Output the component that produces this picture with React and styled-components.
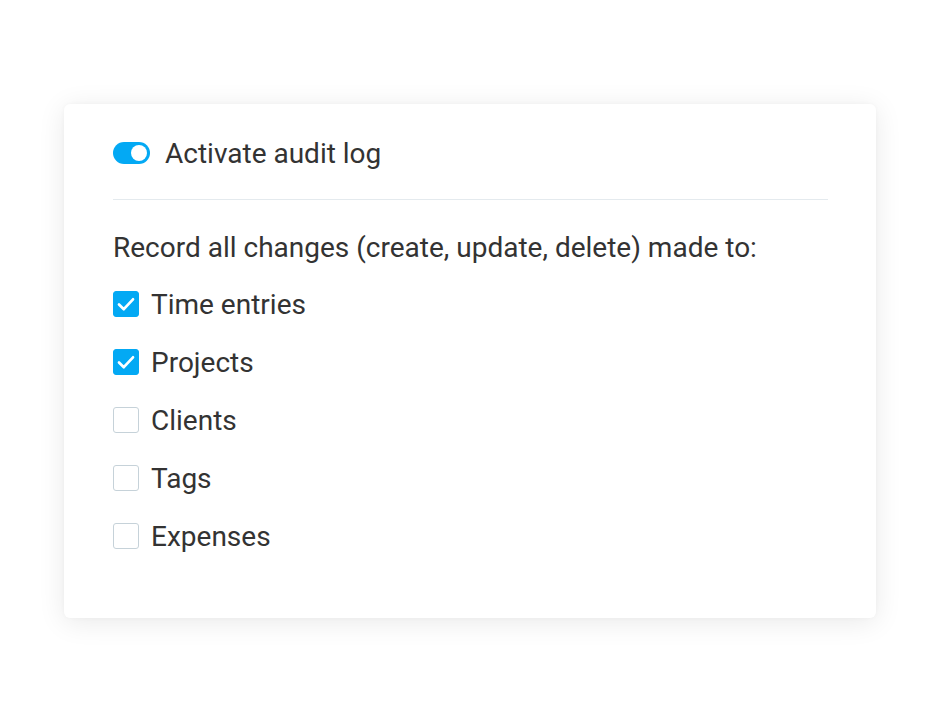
import React from "react";
import styled, { createGlobalStyle } from "styled-components";

const Global = createGlobalStyle`
  html, body { margin: 0; padding: 0; background: #ffffff; }
  body { font-family: Roboto, "Liberation Sans", Arial, sans-serif; }
`;

const Page = styled.div`
  height: 721px;
  display: flex;
  align-items: center;
  justify-content: center;
`;

const Card = styled.div`
  width: 812px;
  height: 514px;
  box-sizing: border-box;
  background: #fff;
  border-radius: 6px;
  box-shadow: 0 4px 28px rgba(0, 0, 0, 0.09), 0 0 4px rgba(0, 0, 0, 0.03);
  padding: 35px 48px 0 49px;
  display: flex;
  flex-direction: column;
`;

const Row = styled.label`
  display: flex;
  align-items: center;
  height: 30px;
  gap: ${(p) => p.$gap || 12}px;
  font-size: 28px;
  line-height: 30px;
  color: #333333;
`;

const Toggle = styled.span`
  width: 37px;
  height: 22px;
  border-radius: 11px;
  background: #03a9f4;
  position: relative;
  flex: none;
  margin-top: -1px;
  &::after {
    content: "";
    position: absolute;
    right: 3px;
    top: 3px;
    width: 16px;
    height: 16px;
    border-radius: 50%;
    background: #fff;
  }
`;

const Divider = styled.div`
  height: 1px;
  background: #e4eaee;
  margin-top: 30px;
`;

const Intro = styled.div`
  margin-top: 33px;
  font-size: 28px;
  line-height: 30px;
  color: #333333;
`;

const List = styled.div`
  margin-top: 27px;
  display: flex;
  flex-direction: column;
  gap: 28px;
`;

const Box = styled.span`
  width: 26px;
  height: 26px;
  box-sizing: border-box;
  border-radius: 3px;
  flex: none;
  display: flex;
  align-items: center;
  justify-content: center;
  margin-top: -1px;
  background: ${(p) => (p.$checked ? "#03a9f4" : "#fff")};
  border: 1px solid ${(p) => (p.$checked ? "#03a9f4" : "#c6d2d9")};
`;

const Check = () => (
  <svg width="22" height="22" viewBox="0 0 22 22" fill="none">
    <path d="M4 11.5 L8.8 16.2 L18 6.3" stroke="#fff" strokeWidth="2.7" strokeLinecap="round" strokeLinejoin="round" />
  </svg>
);

const items = [
  { label: "Time entries", checked: true },
  { label: "Projects", checked: true },
  { label: "Clients", checked: false },
  { label: "Tags", checked: false },
  { label: "Expenses", checked: false },
];

export default function App() {
  return (
    <>
      <Global />
      <Page>
        <Card>
          <Row $gap={15}>
            <Toggle />
            Activate audit log
          </Row>
          <Divider />
          <Intro>Record all changes (create, update, delete) made to:</Intro>
          <List>
            {items.map((it) => (
              <Row key={it.label}>
                <Box $checked={it.checked}>{it.checked && <Check />}</Box>
                {it.label}
              </Row>
            ))}
          </List>
        </Card>
      </Page>
    </>
  );
}
